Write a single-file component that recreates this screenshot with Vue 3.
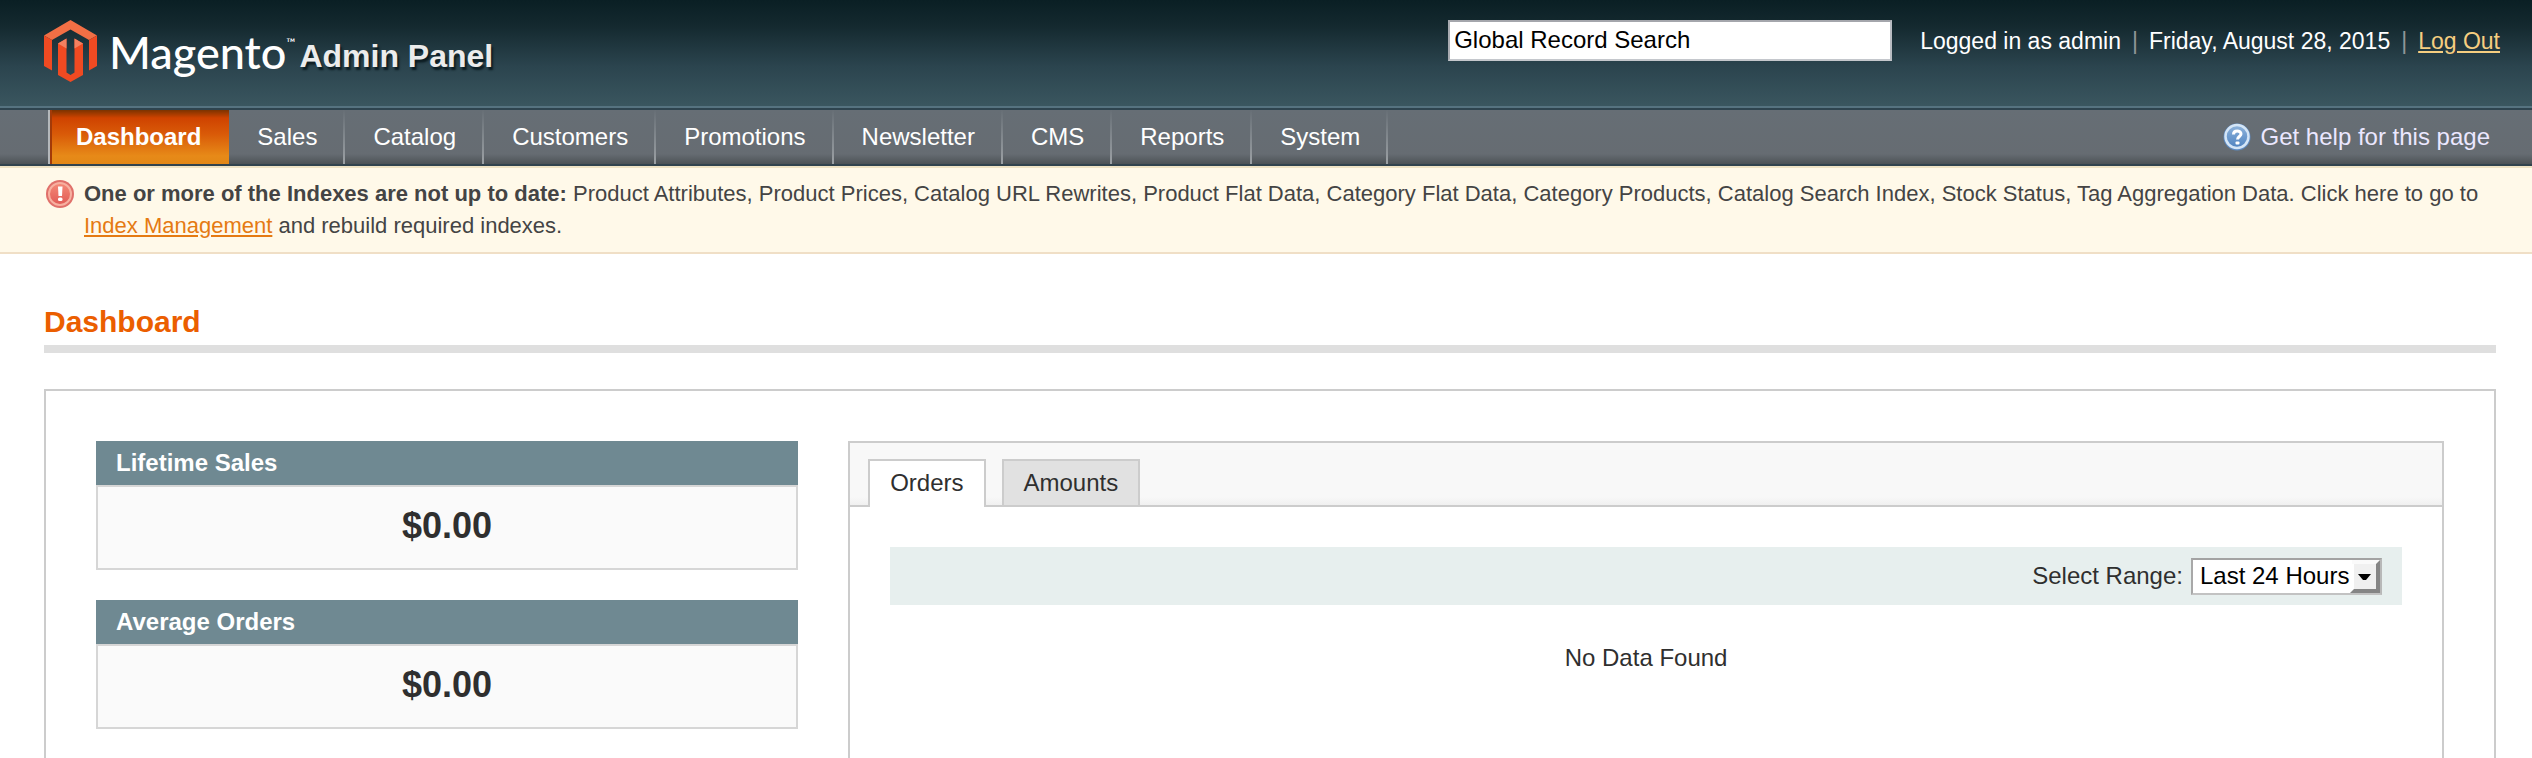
<script setup>
import { ref } from 'vue'

const menu = ['Dashboard', 'Sales', 'Catalog', 'Customers', 'Promotions', 'Newsletter', 'CMS', 'Reports', 'System']
const activeMenu = ref('Dashboard')

const indexes = [
  'Product Attributes',
  'Product Prices',
  'Catalog URL Rewrites',
  'Product Flat Data',
  'Category Flat Data',
  'Category Products',
  'Catalog Search Index',
  'Stock Status',
  'Tag Aggregation Data'
].join(', ')

const totals = [
  { title: 'Lifetime Sales', value: '$0.00' },
  { title: 'Average Orders', value: '$0.00' }
]

const tabs = ['Orders', 'Amounts']
const activeTab = ref('Orders')

const search = ref('Global Record Search')
const ranges = ['Last 24 Hours', 'Last 7 Days', 'Current Month', 'YTD', '2YTD']
const range = ref(ranges[0])
</script>

<template>
  <div class="page">
    <header class="header">
      <a class="logo" href="#">
        <svg class="logo-mark" viewBox="0 0 53 62" aria-hidden="true">
          <path fill="#f26f45" d="M26.5 0 53 15.500 45 20 26.500 9.500 8 20 0 15.500z" />
          <path fill="#f04a22" d="M0 15.500 8 20V50.500L0 46z" />
          <path fill="#f04a22" d="M45 20 53 15.500V46L45 50.500z" />
          <path fill="#f04a22" d="M14 23.500 22.500 18.500V52.500L26.500 55 30.500 52.500V18.500L39 23.500V55L26.500 62 14 55z" />
          <path fill="#f58060" d="M14 23.500 22.500 18.500V28.500zM39 23.500 30.500 18.500V28.500z" />
        </svg>
        <span class="logo-name">Magento<span class="logo-tm">™</span></span>
        <span class="logo-sub">Admin Panel</span>
      </a>
      <div class="header-right">
        <input v-model="search" class="search" type="text" aria-label="Global Record Search" />
        <p class="account">
          <span>Logged in as admin</span>
          <span class="bar">|</span>
          <span>Friday, August 28, 2015</span>
          <span class="bar">|</span>
          <a class="logout" href="#">Log Out</a>
        </p>
      </div>
    </header>

    <nav class="nav">
      <ul class="menu">
        <li v-for="item in menu" :key="item" :class="{ active: item === activeMenu }">
          <a href="#" @click.prevent="activeMenu = item">{{ item }}</a>
        </li>
      </ul>
      <a class="help" href="#">
        <svg class="icon" viewBox="0 0 28 28" aria-hidden="true">
          <defs>
            <linearGradient id="help-fill" x1="0" y1="0" x2="0" y2="1">
              <stop offset="0" stop-color="#8fb4dc" />
              <stop offset="1" stop-color="#4f83c0" />
            </linearGradient>
          </defs>
          <circle cx="14" cy="14" r="13.500" fill="#5d8bc2" />
          <circle cx="14" cy="13.500" r="11.500" fill="url(#help-fill)" stroke="#d4e5f6" stroke-width="2.500" />
          <path d="M10.500 11.500C10.500 6.800 18 7 18 11 18 13.500 14.500 13.500 14.500 16.500" fill="none" stroke="#fff" stroke-width="3" />
          <rect x="12.500" y="18.500" width="4" height="3" rx="1" fill="#fff" />
        </svg>
        Get help for this page
      </a>
    </nav>

    <div class="notice">
      <svg class="icon" viewBox="0 0 28 28" aria-hidden="true">
        <defs>
          <linearGradient id="alert-fill" x1="0" y1="0" x2="0" y2="1">
            <stop offset="0" stop-color="#f58a78" />
            <stop offset="1" stop-color="#e05a55" />
          </linearGradient>
        </defs>
        <circle cx="14" cy="14" r="14" fill="#e0706a" />
        <circle cx="14" cy="14" r="11" fill="url(#alert-fill)" stroke="#f7b0a0" stroke-width="2" />
        <path fill="#fff" d="M12 6.500h4.500L16 16h-3.500z" />
        <rect x="12" y="17.500" width="4.500" height="3.500" rx="1.500" fill="#fff" />
      </svg>
      <p>
        <strong>One or more of the Indexes are not up to date:</strong>
        {{ indexes }}. Click here to go to <a href="#">Index Management</a> and rebuild required indexes.
      </p>
    </div>

    <main class="content">
      <h1>Dashboard</h1>
      <div class="panel">
        <section class="totals">
          <article v-for="total in totals" :key="total.title" class="total">
            <h2>{{ total.title }}</h2>
            <p>{{ total.value }}</p>
          </article>
        </section>

        <section class="chart">
          <div class="tabs" role="tablist">
            <button
              v-for="tab in tabs"
              :key="tab"
              type="button"
              role="tab"
              class="tab"
              :class="{ active: tab === activeTab }"
              :aria-selected="tab === activeTab"
              @click="activeTab = tab"
            >{{ tab }}</button>
          </div>
          <div class="tab-body">
            <div class="range">
              <label for="range">Select Range:</label>
              <span class="select-box">
                <select id="range" v-model="range">
                  <option v-for="item in ranges" :key="item">{{ item }}</option>
                </select>
                <svg class="select-arrow" viewBox="0 0 30 33" aria-hidden="true">
                  <path fill="#fafafa" d="M2 0H30L26 4H2z" />
                  <path fill="#858585" d="M30 0V33H0L4 29H26V4z" />
                  <rect x="4" y="4" width="22" height="25" fill="#f0f0f0" />
                  <path fill="#000" d="M8 14H21L16 20H13z" />
                </svg>
              </span>
            </div>
            <p class="empty">No Data Found</p>
          </div>
        </section>
      </div>
    </main>
  </div>
</template>

<style>
body {
  margin: 0;
  background: #fff;
}
</style>

<style scoped>
.page {
  display: flex;
  flex-direction: column;
  min-height: 100vh;
  color: #2f2f2f;
  font-family: "Liberation Sans", Arial, Helvetica, sans-serif;
  font-size: 24px;
  line-height: 32px;
}

.page *,
.page {
  box-sizing: border-box;
}

p,
h1,
h2,
ul {
  margin: 0;
  padding: 0;
}

.icon {
  flex: none;
  width: 28px;
  height: 28px;
}

.header {
  display: flex;
  justify-content: space-between;
  align-items: flex-start;
  height: 110px;
  padding: 20px 32px 0 44px;
  background: linear-gradient(#0a1f24, #14292f 26px, #2b444e 66px, #3a565f 106px);
  border-bottom: 2px solid #2e444f;
  box-shadow: inset 0 -2px #567380;
}

.logo {
  display: flex;
  align-items: flex-start;
  color: #fff;
  text-decoration: none;
  white-space: nowrap;
}

.logo-mark {
  width: 53px;
  height: 62px;
  margin-right: 12px;
}

.logo-name {
  display: flex;
  font-family: Lato, "Open Sans", sans-serif;
  font-size: 45px;
  font-weight: 500;
  line-height: 64px;
}

.logo-tm {
  font-size: 12px;
  line-height: 46px;
}

.logo-sub {
  margin-left: 4px;
  color: #ececec;
  font-family: "Liberation Sans", Arial, sans-serif;
  font-size: 32px;
  font-weight: 700;
  line-height: 72px;
  text-shadow: 2px 3px 2px #0c1c22;
}

.header-right {
  display: flex;
  gap: 28px;
}

.search {
  width: 444px;
  height: 41px;
  padding: 0 4px 2px;
  border: 2px solid;
  border-color: #a4a6ac #b9bcc2 #c4c7cc #a9abb1;
  border-radius: 0;
  background: #fff;
  color: #000;
  font: inherit;
}

.account {
  display: flex;
  gap: 11px;
  padding-top: 5px;
  color: #fff;
  font-size: 23px;
}

.bar {
  color: #8f9698;
}

.logout {
  color: #f6ce80;
}

.nav {
  display: flex;
  justify-content: space-between;
  align-items: center;
  height: 56px;
  padding: 0 42px 0 48px;
  background: linear-gradient(#666e75, #666c72 44px, #4c5256 54px);
  border-bottom: 2px solid #31434e;
}

.menu {
  display: flex;
  list-style: none;
  border-left: 2px solid #b4b8bb;
}

.menu li {
  border-right: 2px solid;
  border-image: linear-gradient(#666e75, #9da2a6) 1;
}

.menu li.active {
  border: 0;
  background: linear-gradient(#7c3300, #cf4300 8px, #d95a08 24px, #e78a18 46px, #e38717);
  box-shadow: inset 2px 0 #a33a08;
}

.menu a {
  display: block;
  padding: 0 26px 0 28px;
  color: #fff;
  line-height: 54px;
  text-decoration: none;
}

.menu .active a {
  padding: 0 28px 0 26px;
  font-weight: 700;
}

.help {
  display: flex;
  align-items: center;
  gap: 10px;
  color: #ebe7ff;
  text-decoration: none;
}

.notice {
  display: flex;
  gap: 10px;
  padding: 10px 46px;
  border-top: 2px solid #efe3c4;
  border-bottom: 2px solid #f0dfc6;
  background: #fff9e9;
  color: #444;
  font-size: 22px;
}

.notice .icon {
  margin-top: 2px;
}

.notice a {
  color: #e57a12;
}

.content {
  display: flex;
  flex: 1;
  flex-direction: column;
  padding: 50px 36px 0 44px;
}

h1 {
  padding-bottom: 6px;
  border-bottom: 8px solid #dfdfdf;
  color: #eb5e00;
  font-size: 30px;
  line-height: 35px;
}

.panel {
  display: grid;
  flex: 1;
  grid-template-columns: 22fr 50fr;
  gap: 50px;
  margin-top: 36px;
  padding: 50px 50px 0;
  border: 2px solid #ccc;
  border-bottom: 0;
}

.totals {
  display: flex;
  flex-direction: column;
  gap: 30px;
}

.total h2 {
  padding: 0 20px;
  background: #6f8992;
  color: #fff;
  font-size: 24px;
  line-height: 44px;
}

.total p {
  padding: 19px 0 22px;
  border: 2px solid #d6d6d6;
  background: #fafafa;
  font-size: 36px;
  font-weight: 700;
  line-height: 40px;
  text-align: center;
}

.chart {
  border: 2px solid #ccc;
  border-bottom: 0;
}

.tabs {
  display: flex;
  gap: 16px;
  height: 64px;
  padding: 16px 18px 0;
  border-bottom: 2px solid #ccc;
  background: linear-gradient(#f8f8f8 54px, #f0f0f0);
}

.tab {
  height: 46px;
  padding: 0 20px;
  border: 2px solid #ccc;
  border-bottom: 0;
  background: #e1e1e1;
  color: #2f2f2f;
  font: inherit;
}

.tab.active {
  height: 48px;
  padding-bottom: 2px;
  background: #fff;
}

.tab-body {
  padding: 40px;
}

.range {
  display: flex;
  justify-content: flex-end;
  align-items: center;
  gap: 8px;
  height: 58px;
  padding: 0 20px;
  background: #e7efee;
}

.select-box {
  position: relative;
  display: flex;
}

select {
  width: 191px;
  height: 37px;
  padding: 0 30px 0 7px;
  border: 2px solid;
  border-color: #a3a3a3 #b8b8b8 #c2c2c2 #a8a8a8;
  border-radius: 0;
  background: #fff;
  color: #000;
  font: inherit;
  appearance: none;
}

.select-arrow {
  position: absolute;
  top: 2px;
  right: 2px;
  width: 30px;
  height: 33px;
  pointer-events: none;
}

.empty {
  padding-top: 37px;
  text-align: center;
}
</style>
